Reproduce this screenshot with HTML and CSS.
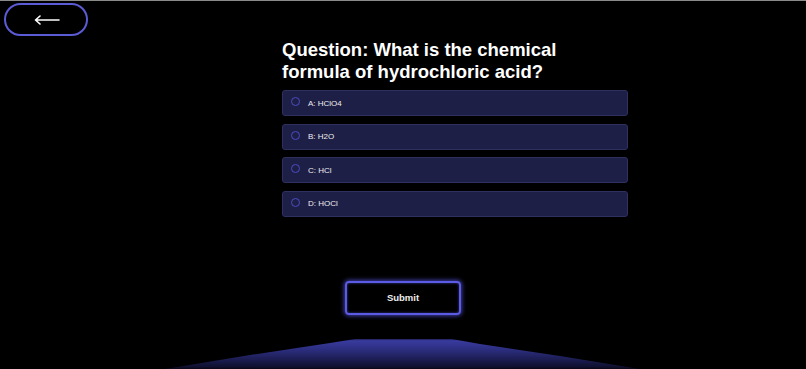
FILE: index.html
```html
<!DOCTYPE html>
<html lang="en">
<head>
	<meta charset="UTF-8">
	<title>Quiz</title>
	<link rel="stylesheet" href="styles.css">
</head>
<body>
	<div class="page">
		<div class="top">
			<a class="back" href="javascript:;">
				<svg width="26" height="10" viewBox="0 0 26 10">
					<path d="M25 5H2M6 1L1.5 5L6 9" fill="none" stroke="#fff" stroke-width="1.6" stroke-linecap="round" stroke-linejoin="round"/>
				</svg>
			</a>
		</div>
		<div class="quiz">
			<h1 class="title">Question: What is the chemical formula of hydrochloric acid?</h1>
			<ul class="options">
				<li class="option"><span class="radio"></span><span>A: HClO4</span></li>
				<li class="option"><span class="radio"></span><span>B: H2O</span></li>
				<li class="option"><span class="radio"></span><span>C: HCl</span></li>
				<li class="option"><span class="radio"></span><span>D: HOCl</span></li>
			</ul>
		</div>
		<div class="actions">
			<a class="submit" href="javascript:;">Submit</a>
		</div>
		<div class="stage"></div>
	</div>
</body>
</html>
```

FILE: styles.css
```css
html,body,ul,h1{margin: 0;padding: 0;}
html{background: #000;}
body{font-family: "Liberation Sans", Arial, sans-serif;color: #fff;border-top: 1px solid #8a8a8a;}
li{list-style: none;}
a{text-decoration: none;color: #fff;}
.page{height: 368px;position: relative;overflow: hidden;}
.top{padding: 2px 0 0 4px;height: 34px;}
.back{display: flex;align-items: center;justify-content: center;width: 80px;height: 29px;border: 2px solid #5b5bd6;border-radius: 17px;}
.back svg{margin-left: 2px;}
.quiz{width: 346px;margin-left: 282px;}
.title{font-size: 18.5px;line-height: 22px;font-weight: bold;width: 290px;margin-top: 2px;}
.options{margin-top: 7px;display: flex;flex-direction: column;gap: 7.5px;}
.option{height: 24px;display: flex;align-items: center;background: #1e1f47;border: 1px solid #2e3060;border-radius: 3px;font-size: 8px;padding-left: 8px;box-sizing: content-box;color: #eee;}
.radio{width: 7px;height: 7px;border: 1px solid #4b4dc2;border-radius: 50%;margin-right: 8px;margin-top: -3px;}
.actions{display: flex;justify-content: center;margin-top: 64px;}
.submit{width: 112px;height: 30px;display: flex;align-items: center;justify-content: center;border: 2px solid #5b5be6;border-radius: 4px;font-size: 9.5px;font-weight: bold;color: #eee;box-shadow: 0 0 4px 1px rgba(90,90,240,.7), inset 0 0 3px rgba(90,90,240,.6);}
.stage{position: absolute;left: 0;right: 0;bottom: 0;height: 30px;background: linear-gradient(#3c3ea6, #2a2c7a 40%, #0c0c24);clip-path: polygon(355px 0, 452px 0, 480px 5px, 560px 17px, 640px 30px, 165px 30px, 250px 16px, 330px 4px);filter: blur(1.2px);}
```
